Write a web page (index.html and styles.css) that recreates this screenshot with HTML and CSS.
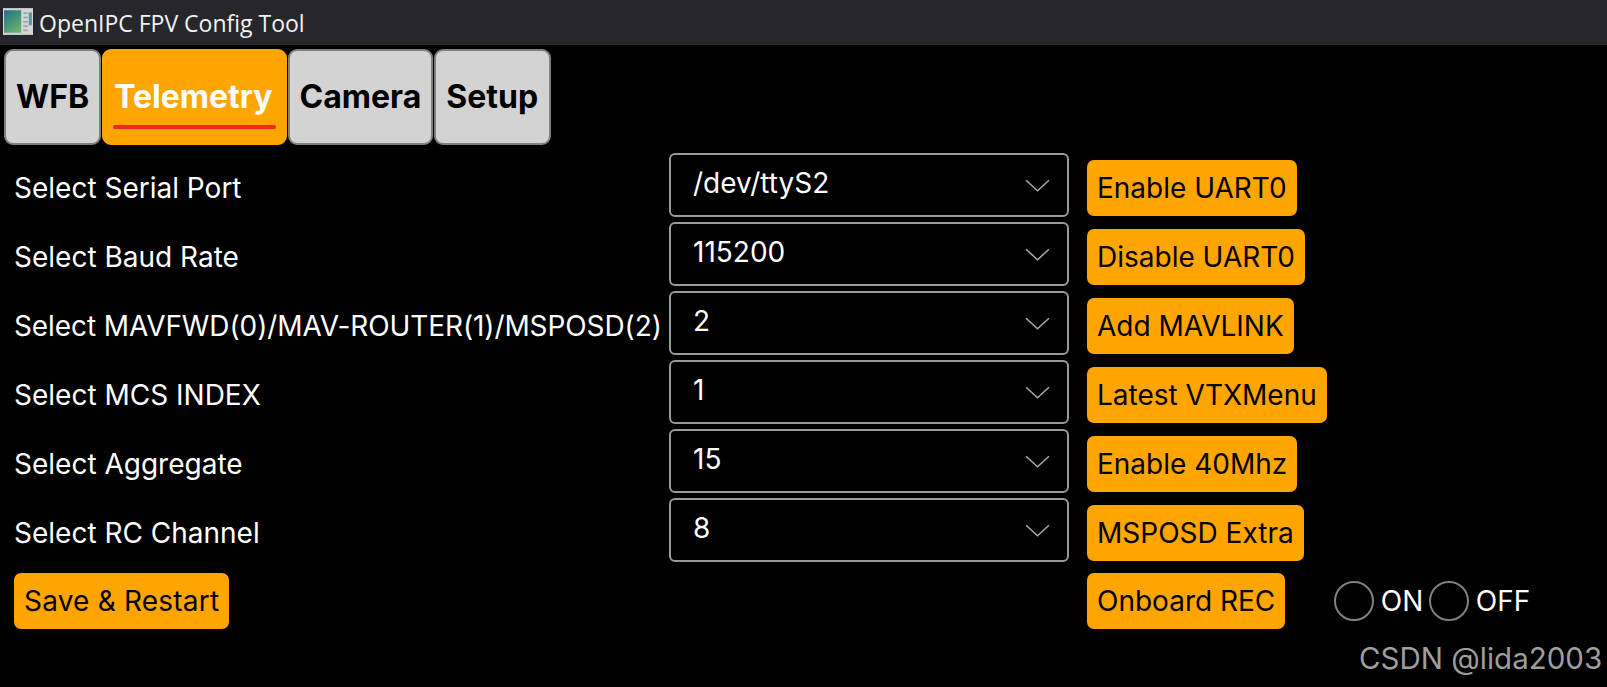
FILE: index.html
```html
<!DOCTYPE html>
<html lang="en">
<head>
<meta charset="utf-8">
<title>OpenIPC FPV Config Tool</title>
<link rel="stylesheet" href="styles.css">
</head>
<body>
<header class="titlebar">
  <svg class="app-icon" viewBox="0 0 28 25" width="30" height="27">
    <defs><linearGradient id="g" x1="0" y1="0" x2="0.6" y2="1"><stop offset="0" stop-color="#1f6f8f"/><stop offset="1" stop-color="#66b06a"/></linearGradient></defs>
    <rect width="28" height="25" fill="#d4d6d6"/>
    <rect x="1" y="2" width="16" height="21" fill="url(#g)"/>
    <rect x="19" y="4" width="4" height="1.5" fill="#9aa0a0"/>
    <rect x="19" y="8" width="4" height="1.5" fill="#9aa0a0"/>
    <rect x="19" y="12" width="4" height="1.5" fill="#9aa0a0"/>
    <rect x="19" y="16" width="4" height="1.5" fill="#9aa0a0"/>
    <rect x="19" y="20" width="4" height="1.5" fill="#9aa0a0"/>
    <rect x="24" y="4" width="3" height="12" fill="#5b9aa5"/>
  </svg>
  <span class="title-text">OpenIPC FPV Config Tool</span>
</header>
<nav class="tabs">
  <div class="tab">WFB</div>
  <div class="tab active"><span class="tab-label">Telemetry</span></div>
  <div class="tab">Camera</div>
  <div class="tab setup">Setup</div>
</nav>
<main class="form">
  <div class="label">Select Serial Port</div>
  <div class="select"><span>/dev/ttyS2</span><svg class="chev" viewBox="0 0 24 12" width="25" height="13"><path d="M1 1 12 11 23 1"/></svg></div>
  <div class="btn">Enable UART0</div>

  <div class="label">Select Baud Rate</div>
  <div class="select"><span>115200</span><svg class="chev" viewBox="0 0 24 12" width="25" height="13"><path d="M1 1 12 11 23 1"/></svg></div>
  <div class="btn">Disable UART0</div>

  <div class="label long">Select MAVFWD(0)/MAV-ROUTER(1)/MSPOSD(2)</div>
  <div class="select"><span>2</span><svg class="chev" viewBox="0 0 24 12" width="25" height="13"><path d="M1 1 12 11 23 1"/></svg></div>
  <div class="btn">Add MAVLINK</div>

  <div class="label">Select MCS INDEX</div>
  <div class="select"><span>1</span><svg class="chev" viewBox="0 0 24 12" width="25" height="13"><path d="M1 1 12 11 23 1"/></svg></div>
  <div class="btn">Latest VTXMenu</div>

  <div class="label">Select Aggregate</div>
  <div class="select"><span>15</span><svg class="chev" viewBox="0 0 24 12" width="25" height="13"><path d="M1 1 12 11 23 1"/></svg></div>
  <div class="btn">Enable 40Mhz</div>

  <div class="label">Select RC Channel</div>
  <div class="select"><span>8</span><svg class="chev" viewBox="0 0 24 12" width="25" height="13"><path d="M1 1 12 11 23 1"/></svg></div>
  <div class="btn">MSPOSD Extra</div>

  <div class="last-left"><div class="btn">Save &amp; Restart</div></div>
  <div class="spacer"></div>
  <div class="last-right">
    <div class="btn">Onboard REC</div>
    <div class="radios">
      <span class="radio"></span><span class="radio-text">ON</span>
      <span class="radio"></span><span class="radio-text">OFF</span>
    </div>
  </div>
</main>
<div class="watermark">CSDN @lida2003</div>
</body>
</html>
```
FILE: styles.css
```css
* { box-sizing: border-box; }
html, body { margin: 0; padding: 0; height: 100%; }
body {
  background: #000;
  color: #fff;
  font-family: Inter, "Noto Sans", sans-serif;
  position: relative;
  overflow: hidden;
}
.titlebar {
  height: 45px;
  background: #27262a;
  display: flex;
  align-items: center;
  padding-left: 3px;
  gap: 6px;
}
.app-icon { flex: none; margin-top: -3px; }
.title-text {
  font-family: "Open Sans", sans-serif;
  font-size: 23px;
  color: #f2f2f2;
}
.tabs {
  display: flex;
  padding: 4px 0 0 4px;
  gap: 1px;
}
.tab {
  height: 96px;
  padding: 0 10px 1px;
  background: #d3d3d3;
  border: 2px solid #808080;
  border-radius: 9px;
  color: #000;
  font-size: 32px;
  font-weight: 700;
  display: flex;
  align-items: center;
}
.tab.active {
  background: #ffa500;
  border-color: #ffa500;
  color: #fff;
  padding-right: 12px;
}
.tab.setup { padding-right: 11px; }
.tab-label {
  display: block;
  position: relative;
}
.tab-label::after {
  content: "";
  position: absolute;
  left: -1px;
  right: -3px;
  bottom: -13px;
  height: 4px;
  border-radius: 2px;
  background: #ee2a1e;
}
.form {
  display: grid;
  grid-template-columns: 654px 400px auto;
  grid-auto-rows: 64px;
  row-gap: 5px;
  column-gap: 15px;
  padding: 8px 0 0 0;
  justify-content: start;
}
.label {
  font-size: 28px;
  padding-left: 14px;
  padding-top: 5px;
  display: flex;
  align-items: center;
  white-space: nowrap;
}
.label.long { letter-spacing: -0.1px; }
.select {
  border: 2px solid #9a9a9a;
  border-radius: 6px;
  font-size: 28px;
  padding: 0 17px 0 22px;
  display: flex;
  align-items: center;
  justify-content: space-between;
}
.select span { margin-bottom: 4px; }
.chev { fill: none; stroke: #a8a8a8; stroke-width: 1.5; }
.btn {
  align-self: end;
  justify-self: start;
  height: 56px;
  margin: 0 0 1.5px 3px;
  padding: 0 10px;
  background: #ffa500;
  color: #000;
  border-radius: 7px;
  font-size: 28px;
  display: flex;
  align-items: center;
  white-space: nowrap;
}
.last-left { padding: 6px 0 0 14px; }
.last-left .btn { margin: 0; width: max-content; letter-spacing: 0.2px; }
.last-right { display: flex; align-items: center; padding-top: 6px; align-self: start; white-space: nowrap; }
.last-right .btn { margin-bottom: 0; }
.radios { display: flex; align-items: center; margin-left: 49px; }
.radio {
  width: 40px;
  height: 40px;
  border: 2px solid #808080;
  border-radius: 50%;
}
.radio-text { font-size: 28px; margin: 0 6px 0 6.5px; }
.watermark {
  position: absolute;
  left: 1359px;
  top: 640px;
  font-size: 29.5px;
  color: #9e9e9e;
  white-space: nowrap;
}
```
